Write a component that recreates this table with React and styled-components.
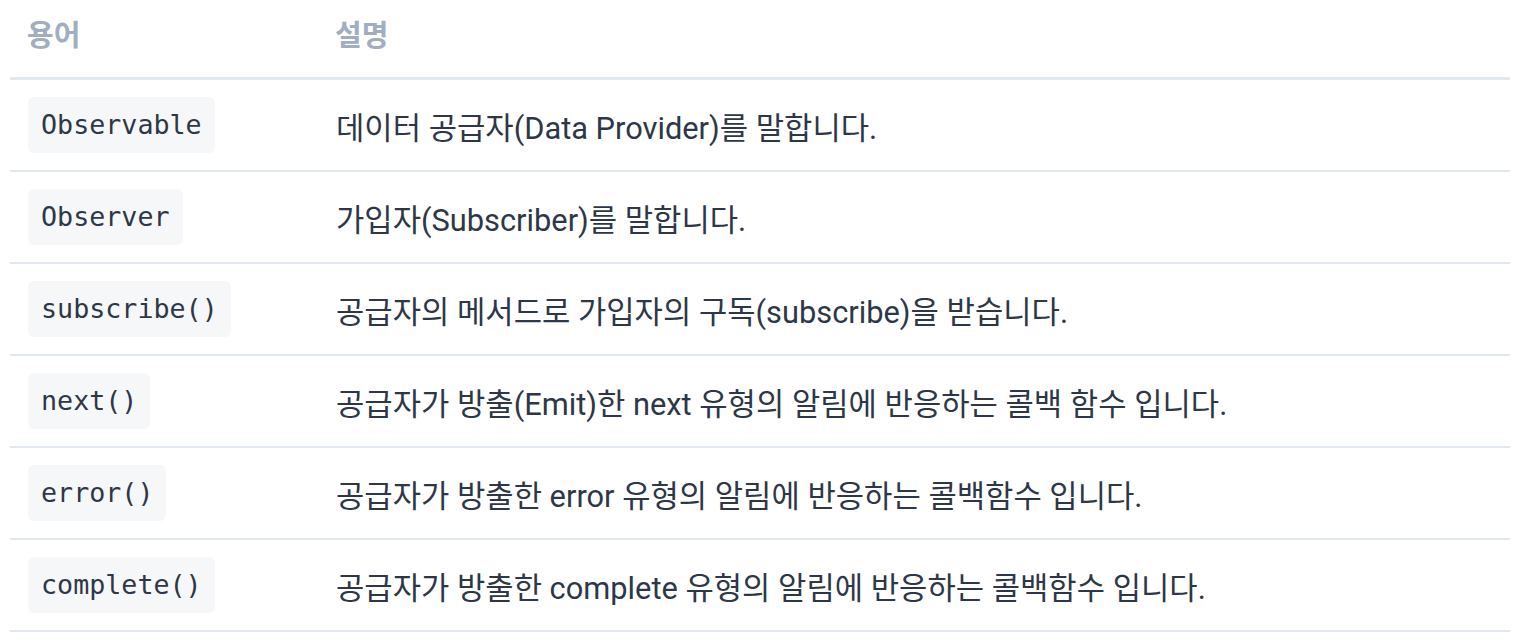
import React from 'react';
import styled, { createGlobalStyle } from 'styled-components';

const GlobalStyle = createGlobalStyle`
  html, body {
    margin: 0;
    padding: 0;
    background: #ffffff;
  }
  body {
    font-family: Roboto, "Noto Sans CJK KR", sans-serif;
    color: #2d3748;
  }
`;

const rows = [
  { term: 'Observable', desc: '데이터 공급자(Data Provider)를 말합니다.' },
  { term: 'Observer', desc: '가입자(Subscriber)를 말합니다.' },
  { term: 'subscribe()', desc: '공급자의 메서드로 가입자의 구독(subscribe)을 받습니다.' },
  { term: 'next()', desc: '공급자가 방출(Emit)한 next 유형의 알림에 반응하는 콜백 함수 입니다.' },
  { term: 'error()', desc: '공급자가 방출한 error 유형의 알림에 반응하는 콜백함수 입니다.' },
  { term: 'complete()', desc: '공급자가 방출한 complete 유형의 알림에 반응하는 콜백함수 입니다.' },
];

const App = () => {
  return (
    <Page>
      <GlobalStyle />
      <Table>
        <HeadRow>
          <HeadCell>용어</HeadCell>
          <HeadCell>설명</HeadCell>
        </HeadRow>
        {rows.map((r) => (
          <Row key={r.term}>
            <Cell>
              <Code>{r.term}</Code>
            </Cell>
            <Cell>{r.desc}</Cell>
          </Row>
        ))}
      </Table>
    </Page>
  );
};

export default App;

const Page = styled.div`
  padding: 0 12px 0 10px;
`;

const Table = styled.div`
  width: 1500px;
  display: flex;
  flex-direction: column;
`;

const HeadRow = styled.div`
  display: grid;
  grid-template-columns: 308px 1fr;
  height: 77px;
  border-bottom: 3px solid #e2e8f0;
`;

const HeadCell = styled.div`
  padding: 15px 17px 0;
  line-height: 43px;
  font-family: Roboto, "Noto Sans CJK KR", sans-serif;
  font-size: 29px;
  font-weight: 700;
  color: #a0aec0;
`;

const Row = styled.div`
  display: grid;
  grid-template-columns: 308px 1fr;
  height: 90px;
  border-bottom: 2px solid #e2e8f0;
`;

const Cell = styled.div`
  display: flex;
  align-items: center;
  padding: 0 18px;
  font-family: Roboto, "Noto Sans CJK KR", sans-serif;
  font-size: 30.8px;
  color: #2d3748;
  white-space: nowrap;
`;

const Code = styled.code`
  display: inline-block;
  padding: 8px 13px;
  line-height: 40px;
  font-family: "DejaVu Sans Mono", monospace;
  font-size: 26.7px;
  color: #2d3748;
  background: #f5f7f9;
  border-radius: 6px;
`;
